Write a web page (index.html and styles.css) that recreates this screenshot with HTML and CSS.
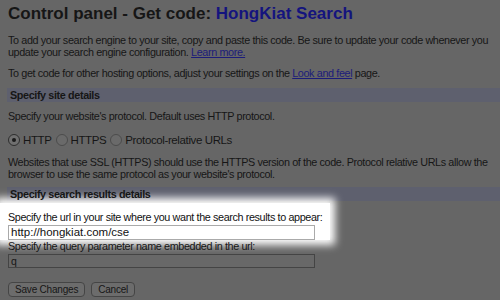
FILE: index.html
```html
<!DOCTYPE html>
<html lang="en">

<head>
    <meta charset="UTF-8" />
    <title>Control panel - Get code</title>
    <link rel="stylesheet" href="styles.css">
</head>

<body>
    <h1 class="title">Control panel - Get code: <span class="engine">HongKiat Search</span></h1>
    <p class="paraText">
        To add your search engine to your site, copy and paste this code. Be sure to update your code whenever you
        update your search engine configuration. <a href="#">Learn more.</a>
    </p>
    <p class="paraText">To get code for other hosting options, adjust your settings on the <a href="#">Look and feel</a> page.</p>

    <div class="section">Specify site details</div>
    <p class="paraText tight">Specify your website's protocol. Default uses HTTP protocol.</p>
    <div class="radios">
        <label><span class="radio checked"></span>HTTP</label>
        <label><span class="radio"></span>HTTPS</label>
        <label><span class="radio"></span>Protocol-relative URLs</label>
    </div>
    <p class="paraText short">
        Websites that use SSL (HTTPS) should use the HTTPS version of the code. Protocol relative URLs allow the
        browser to use the same protocol as your website's protocol.
    </p>

    <div class="section">Specify search results details</div>
    <div class="spot">
        <div class="fieldLabel">Specify the url in your site where you want the search results to appear:</div>
        <div class="field">http://hongkiat.com/cse</div>
    </div>
    <div class="fieldLabel">Specify the query parameter name embedded in the url:</div>
    <div class="field dim">q</div>

    <div class="buttons">
        <span class="btn">Save Changes</span>
        <span class="btn">Cancel</span>
    </div>
</body>

</html>
```

FILE: styles.css
```css
html {
    overflow: hidden;
}

body {
    margin: 0;
    padding: 4px 8px 0 8px;
    background-color: #666;
    color: #161616;
    font-family: "Liberation Sans", Arial, sans-serif;
    font-size: 10.8px;
    letter-spacing: -0.38px;
    line-height: 12px;
}

a {
    color: #1c1c7a;
}

.title {
    margin: 0 0 10px 0;
    font-size: 17px;
    line-height: 20px;
    font-weight: bold;
    letter-spacing: 0;
}

.engine {
    color: #14147e;
}

.paraText {
    margin: 0 0 9px 0;
}

.paraText.tight {
    margin-bottom: 12px;
}

.paraText.short {
    margin-bottom: 7px;
}

.section {
    margin: 0 -8px 8px -1px;
    padding: 1px 0 0 3px;
    height: 13px;
    background-color: #5e606e;
    font-weight: bold;
}

.radios {
    display: flex;
    align-items: center;
    height: 12px;
    margin-bottom: 10px;
    font-size: 11.5px;
}

.radios label {
    display: flex;
    align-items: center;
    margin-right: 4px;
}

.radio {
    width: 10px;
    height: 10px;
    border: 1px solid #4c4c4c;
    border-radius: 50%;
    background-color: #6a6a6a;
    margin-right: 3px;
    display: flex;
    align-items: center;
    justify-content: center;
}

.radio.checked {
    border-color: #2e2e2e;
    background-color: #707070;
}

.radio.checked::after {
    content: "";
    width: 4px;
    height: 4px;
    border-radius: 50%;
    background-color: #1a1a1a;
}

.spot {
    margin: -6px -8px 0 -8px;
    padding: 8px 8px 0 8px;
    width: 314px;
    background-color: #fff;
    box-shadow: 0 0 8px 5px #fff;
    color: #111;
}

.spot .fieldLabel {
    margin-bottom: 2px;
}

.fieldLabel {
    line-height: 12px;
    white-space: nowrap;
}

.field {
    box-sizing: border-box;
    width: 307px;
    height: 15px;
    padding: 0 2px;
    border: 1px solid #aaa;
    background-color: #fff;
    font-size: 11.5px;
    line-height: 13px;
    letter-spacing: 0;
}

.field.dim {
    height: 14px;
    margin-top: 2px;
    border-color: #444;
    background-color: #686868;
    font-size: 10.5px;
}

.buttons {
    display: flex;
    gap: 6px;
    margin-top: 14px;
}

.btn {
    box-sizing: border-box;
    height: 15px;
    padding: 0 6px;
    border: 1px solid #454545;
    border-radius: 4px;
    background-color: #6c6c6c;
    font-size: 10px;
    line-height: 13px;
    letter-spacing: -0.2px;
}
```
